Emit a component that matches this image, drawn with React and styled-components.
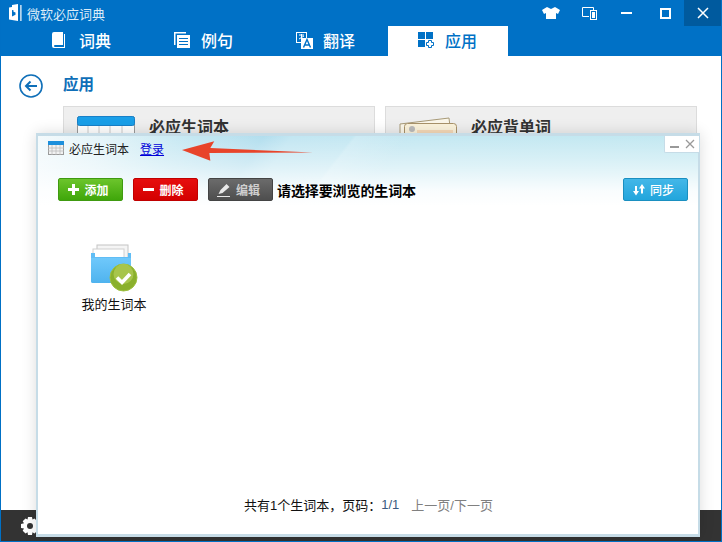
import React from 'react';
import styled, { createGlobalStyle } from 'styled-components';

const Global = createGlobalStyle`
  html, body { margin: 0; padding: 0; background: #fff; }
  body { font-family: "Liberation Sans", "Noto Sans CJK SC", sans-serif; }
  * { box-sizing: border-box; }
`;

const Frame = styled.div`
  position: relative; width: 722px; height: 542px; overflow: hidden;
  background: #fff; border: 1px solid #0070c5; border-top-width: 0;
  display: flex; flex-direction: column;
`;
const Header = styled.header`
  background: #0071c6; height: 56px; margin: 0 -1px; flex: none; display: flex; flex-direction: column;
`;
const TitleBar = styled.div`height: 26px; display: flex; align-items: center; padding-left: 9px; color: #dcecf8;`;
const AppName = styled.span`font-size: 13px; margin-left: 4px;`;
const WindowButtons = styled.div`margin-left: auto; display: flex; height: 26px; align-items: center;`;
const WinBtn = styled.button`
  width: 38px; height: 26px; border: 0; padding: 0; display: flex; align-items: center; justify-content: center;
  background: ${p => (p.$close ? '#005a9e' : 'transparent')};
`;
const Tabs = styled.nav`height: 30px; display: flex; gap: 2px; padding-left: 22px;`;
const Tab = styled.div`
  width: 120px; height: 30px; display: flex; align-items: center; padding: 0 0 2px 30px; gap: ${p => p.$gap}px;
  background: ${p => (p.$active ? '#fff' : 'transparent')};
  color: ${p => (p.$active ? '#0071c6' : '#fff')};
  font-size: 16px; font-weight: 500;
`;
const Main = styled.main`flex: 1; padding: 16px 24px 0 18px; display: flex; flex-direction: column; min-height: 0;`;
const PageHead = styled.div`display: flex; align-items: center; gap: 20px; height: 28px;`;
const PageTitle = styled.h1`margin: 0 0 6px; font-size: 15.500px; font-weight: 700; color: #0f6fb8;`;
const Cards = styled.div`display: flex; gap: 10px; margin: 6px 0 0 44px;`;
const Card = styled.div`
  width: 312px; height: 100px; background: #efefef; border: 1px solid #dcdcdc;
  display: flex; padding: 9px 0 0 ${p => p.$pad}px; gap: 14px; color: #333;
`;
const CardTitle = styled.div`font-size: 16px; font-weight: 700; line-height: 20px; padding-top: 2px;`;
const Footer = styled.footer`height: 31px; background: #333; flex: none; padding: 7px 0 0 20px;`;

const Dialog = styled.section`
  position: absolute; left: 35px; top: 133px; width: 664px; height: 404px;
  border: 2px solid #c6dce7; border-top-width: 3px; border-bottom-width: 3px; background: #fff;
  box-shadow: 0 0 14px rgba(0,0,0,.14);
  display: flex; flex-direction: column;
`;
const DialogBg = styled.div`
  position: absolute; left: 0; top: 0; right: 0; height: 72px;
  background:
    linear-gradient(to bottom, rgba(255,255,255,0) 0, rgba(255,255,255,.45) 30px, rgba(255,255,255,.9) 55px, #fff 70px),
    linear-gradient(128deg, transparent 0 44%, rgba(255,255,255,.16) 44.500%, transparent 52%),
    linear-gradient(122deg, #f4fafc 0, #e2f3f8 10%, #c8e9f3 20%, #b2deee 32%, #c2e6f2 36%, #c4e8f2 55%, #c2e8f1 100%);
`;
const DialogHead = styled.div`position: relative; height: 22px; display: flex; align-items: center; padding: 2px 0 0 10px;`;
const DialogTitle = styled.span`font-size: 12px; color: #222; margin-left: 5px;`;
const LoginLink = styled.a`font-size: 12px; color: #0000d8; text-decoration: underline; margin-left: 11px;`;
const MiniControls = styled.div`
  position: absolute; right: -1px; top: 0; width: 35px; height: 17px; background: #fff;
  border-left: 1px solid #c6dce7; border-bottom: 1px solid #c6dce7; border-radius: 0 0 0 2px;
  display: flex; align-items: center; justify-content: space-around; padding: 0 2px;
`;
const Toolbar = styled.div`position: relative; display: flex; align-items: center; margin-top: 20px; padding: 0 10px 0 20px; height: 23px;`;
const Action = styled.button`
  height: 23px; width: ${p => p.$w}px; margin-right: ${p => p.$mr ?? 10}px; padding: 0 4px 0 0; border-radius: 2px;
  display: flex; align-items: center; justify-content: center; gap: 5px;
  font: ${p => p.$weight || 700} 12px "Liberation Sans", "Noto Sans CJK SC", sans-serif; color: ${p => p.$fg || '#fff'};
  border: 1px solid ${p => p.$line}; background: linear-gradient(to bottom, ${p => p.$from}, ${p => p.$to});
`;
const Hint = styled.span`font-size: 14px; font-weight: 700; color: #000; margin-left: -6px; letter-spacing: -.1px;`;
const Spacer = styled.div`flex: 1;`;
const Folder = styled.div`
  position: relative; width: 78px; margin: 43px 0 0 37px; display: flex; flex-direction: column; align-items: center; gap: 2px;
`;
const FolderName = styled.span`font-size: 13px; color: #111;`;
const Pager = styled.div`
  margin-top: auto; height: 27px; padding: 0 0 30px 206px; font-size: 13px; color: #111; display: flex; align-items: center;
  white-space: nowrap;
`;
const PageNum = styled.span`color: #3a5a80; margin-right: 12px;`;
const Muted = styled.span`color: #808080;`;
const Arrow = styled.svg`position: absolute; left: 180px; top: 140px;`;

const BookIcon = () => (
  <svg width="14" height="17" viewBox="0 0 14 17"><path d="M2 0h9v13H3a1 1 0 0 0 0 2h9V2h1v14H2a2 2 0 0 1-2-2V2a2 2 0 0 1 2-2z" fill="#fff"/></svg>
);
const ListIcon = () => (
  <svg width="16" height="16" viewBox="0 0 16 16" fill="#fff"><path d="M0 0h12v1.500H1.500V13H0z"/><path d="M3 3h13v13H3zM5 6v1h9V6zm0 3v1h9V9zm0 3v1h9v-1z" fillRule="evenodd"/></svg>
);
const TranslateIcon = () => (
  <svg width="17" height="17" viewBox="0 0 17 17">
    <rect x=".5" y=".5" width="10" height="10" fill="#0071c6" stroke="#fff"/>
    <path d="M3 3h5M5.500 2v6M3 7l5-3" stroke="#fff" fill="none"/>
    <rect x="5" y="6" width="12" height="11" fill="#fff"/>
    <path d="M7.500 15.500L11 7.500l3.500 8M9 13h4" stroke="#0071c6" strokeWidth="1.400" fill="none"/>
  </svg>
);
const AppsIcon = () => (
  <svg width="16" height="16" viewBox="0 0 16 16" fill="#0071c6">
    <rect width="7" height="7"/><rect x="8" width="7" height="7"/><rect y="8" width="7" height="7"/>
    <path d="M10.500 8.500h3v2h2v3h-2v2h-3v-2h-2v-3h2z" fill="#fff" stroke="#0071c6"/>
  </svg>
);
const BackIcon = () => (
  <svg width="24" height="24" viewBox="0 0 24 24" fill="none" stroke="#0f6fb8">
    <circle cx="12" cy="12" r="11" strokeWidth="1.600"/>
    <path d="M18 12H7M11.500 7.500L7 12l4.500 4.500" strokeWidth="2"/>
  </svg>
);
const LogoIcon = () => (
  <svg width="14" height="18" viewBox="0 0 14 18">
    <path d="M0 3.500L3 3V1l6-1v17l-6-1-3-.5z" fill="#fff"/>
    <rect x="11.300" y="1" width="1.200" height="16" fill="#fff"/>
    <path d="M3 6v6.500l3.500-1.800V8.500L4.500 7.800V6.300z" fill="#0071c6"/>
  </svg>
);
const Shirt = () => (
  <svg width="18" height="12" viewBox="0 0 18 12" fill="#fff"><path d="M5 0l4 2 4-2 5 3-2 4-2-1v6H4V6L2 7 0 3z"/></svg>
);
const DeviceIcon = () => (
  <svg width="15" height="13" viewBox="0 0 15 13" fill="none" stroke="#fff"><path d="M7 9.500H.5V.5h11V3"/><rect x="8.500" y="3.500" width="6" height="9"/><rect x="10" y="5" width="3" height="6" fill="#fff" stroke="none"/></svg>
);
const MinIcon = () => <svg width="12" height="3"><rect width="11" height="2" y="0" fill="#fff"/></svg>;
const MaxIcon = () => <svg width="11" height="11"><rect x="1" y="1" width="9" height="9" fill="none" stroke="#fff" strokeWidth="2"/></svg>;
const CloseIcon = () => (
  <svg width="12" height="12" viewBox="0 0 12 12"><path d="M1 1l10 10M11 1L1 11" stroke="#fff" strokeWidth="1.500"/></svg>
);
const GridBook = ({ w, h }) => (
  <svg width={w} height={h} viewBox="0 0 58 50">
    <rect x=".5" y=".5" width="57" height="49" rx="2" fill="#fff" stroke="#9a9a9a"/>
    <rect x=".5" y=".5" width="57" height="9" rx="2" fill="#1a9fe8" stroke="#1880c8"/>
    {[19, 28, 37].map(y => <path key={y} d={`M1 ${y}h56`} stroke="#ccc"/>)}
    {[11, 22, 33, 45].map(x => <path key={x} d={`M${x} 10v40`} stroke="#ccc"/>)}
  </svg>
);
const CardsIcon = () => (
  <svg width="58" height="30" viewBox="0 0 58 30">
    <path d="M1 8l49-6 3 26H1z" fill="#fbf7ea" stroke="#a89a78"/>
    <rect x="5.500" y="7.500" width="52" height="24" rx="3" fill="#fbf3dc" stroke="#a8926a"/>
    <circle cx="13" cy="13" r="3" fill="#bbb"/>
    <rect x="18" y="14" width="36" height="3" fill="#f6d9b8"/>
  </svg>
);
const SmallCal = () => (
  <svg width="16" height="14" viewBox="0 0 16 14">
    <rect x=".5" y=".5" width="15" height="13" fill="#f2f2f2" stroke="#9a9a9a"/>
    <rect x="0" y="0" width="16" height="4" fill="#1c8fdc"/>
    <path d="M0 7h16M0 10h16M4 4v10M8 4v10M12 4v10" stroke="#bcbcbc" strokeWidth=".8"/>
  </svg>
);
const Pencil = () => (
  <svg width="14" height="14" viewBox="0 0 14 14" fill="#e8e8e8"><path d="M9.500 1l3 3-7 6-4 1 2-4zM0 13h13v1H0z"/></svg>
);
const SyncIcon = () => (
  <svg width="12" height="12" viewBox="0 0 12 12" fill="#fff"><path d="M2 2h2v5h2l-3 4.500L0 7h2zM8 9.500H10v-5h2L9 0 6 4.500h2z"/></svg>
);
const FolderIcon = () => (
  <svg width="48" height="48" viewBox="0 0 48 48">
    <defs>
      <linearGradient id="folderBody" x1="0" y1="0" x2="0" y2="1">
        <stop offset="0" stopColor="#6fc8fb"/>
        <stop offset="1" stopColor="#4fb3ee"/>
      </linearGradient>
    </defs>
    <rect x="7" y="1" width="31" height="16" fill="#f5f5f5" stroke="#c4c4c4"/>
    <rect x="3" y="5" width="31" height="14" fill="#fff" stroke="#d0d0d0"/>
    <path d="M1 9h4v4h33V9h3v28a2 2 0 0 1-2 2H3a2 2 0 0 1-2-2z" fill="#60bdf5"/>
    <path d="M1 14h40v23a2 2 0 0 1-2 2H3a2 2 0 0 1-2-2z" fill="url(#folderBody)"/>
    <circle cx="33.500" cy="33.500" r="13.500" fill="#8ab02c" stroke="#9fc03f"/>
    <circle cx="33.500" cy="30" r="10" fill="#b4cf58" opacity=".7"/>
    <path d="M27 33.500l5 5 8-8.500" stroke="#fff" strokeWidth="3.600" fill="none"/>
  </svg>
);

export default function App() {
  return (
    <>
      <Global />
      <Frame>
        <Header>
          <TitleBar>
            <LogoIcon />
            <AppName>微软必应词典</AppName>
            <WindowButtons>
              <WinBtn><Shirt /></WinBtn>
              <WinBtn><DeviceIcon /></WinBtn>
              <WinBtn><MinIcon /></WinBtn>
              <WinBtn><MaxIcon /></WinBtn>
              <WinBtn $close><CloseIcon /></WinBtn>
            </WindowButtons>
          </TitleBar>
          <Tabs>
            <Tab $gap={13}><BookIcon />词典</Tab>
            <Tab $gap={11}><ListIcon />例句</Tab>
            <Tab $gap={10}><TranslateIcon />翻译</Tab>
            <Tab $gap={11} $active><AppsIcon />应用</Tab>
          </Tabs>
        </Header>
        <Main>
          <PageHead><BackIcon /><PageTitle>应用</PageTitle></PageHead>
          <Cards>
            <Card $pad={13}><GridBook w={58} h={50} /><CardTitle>必应生词本</CardTitle></Card>
            <Card $pad={13}><CardsIcon /><CardTitle>必应背单词</CardTitle></Card>
          </Cards>
        </Main>
        <Footer>
          <svg width="18" height="18" viewBox="0 0 18 18"><path d="M7 0h4l.5 2.500 2-1 2.800 2.800-1.300 2 2.500.7v4l-2.500.5 1.300 2.200-2.800 2.800-2-1.300L11 18H7l-.5-2.800-2 1.300-2.800-2.800 1.300-2.200L0 11V7l3-.7-1.300-2L4.500 1.500l2 1z" fill="#fff"/><circle cx="9" cy="9" r="3" fill="#333"/></svg>
        </Footer>
        <Dialog>
          <DialogBg />
          <DialogHead>
            <SmallCal />
            <DialogTitle>必应生词本</DialogTitle>
            <LoginLink>登录</LoginLink>
            <MiniControls>
              <svg width="10" height="10"><rect y="7" width="9" height="2" fill="#999"/></svg>
              <svg width="10" height="10" viewBox="0 0 10 10"><path d="M1 1l8 8M9 1L1 9" stroke="#999" strokeWidth="1.300"/></svg>
            </MiniControls>
          </DialogHead>
          <Toolbar>
            <Action $w={65} $line="#3f9a10" $from="#6cc52c" $to="#3fa60a">
              <svg width="11" height="11"><path d="M4 0h3v4h4v3H7v4H4V7H0V4h4z" fill="#fff"/></svg>添加
            </Action>
            <Action $w={65} $line="#c00000" $from="#e60e0e" $to="#d40000">
              <svg width="11" height="11"><rect y="4" width="11" height="3" fill="#fff"/></svg>删除
            </Action>
            <Action $w={65} $mr={10} $fg="#cfcfcf" $line="#444" $from="#6b6b6b" $to="#4e4e4e"><Pencil />编辑</Action>
            <Hint>请选择要浏览的生词本</Hint>
            <Spacer />
            <Action $w={65} $mr={0} $weight={500} $line="#1a8fc0" $from="#43b7e8" $to="#22a5dc"><SyncIcon />同步</Action>
          </Toolbar>
          <Folder>
            <FolderIcon />
            <FolderName>我的生词本</FolderName>
          </Folder>
          <Pager>
            共有1个生词本，页码：<PageNum>1/1</PageNum><Muted>上一页/下一页</Muted>
          </Pager>
        </Dialog>
        <Arrow width="133" height="22" viewBox="0 0 136 22">
          <path d="M135 12.500L30 8 34 1 1 10l29 11-1-8z" fill="#e8442a"/>
        </Arrow>
      </Frame>
    </>
  );
}
